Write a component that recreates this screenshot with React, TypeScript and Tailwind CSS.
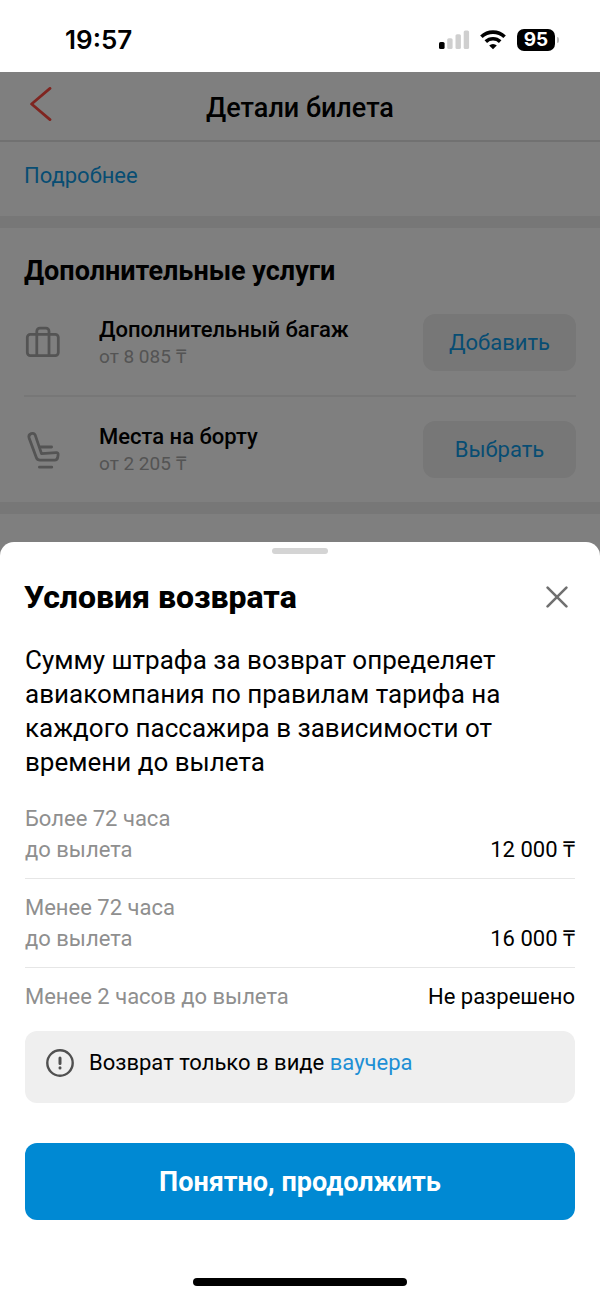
const services = [
    { title: 'Дополнительный багаж', price: 'от 8 085 ₸', action: 'Добавить', icon: <SuitcaseIcon /> },
    { title: 'Места на борту', price: 'от 2 205 ₸', action: 'Выбрать', icon: <SeatIcon /> },
]

const penalties = [
    { lines: ['Более 72 часа', 'до вылета'], value: '12 000 ₸' },
    { lines: ['Менее 72 часа', 'до вылета'], value: '16 000 ₸' },
    { lines: ['Менее 2 часов до вылета'], value: 'Не разрешено' },
]

function SuitcaseIcon() {
    return (
        <svg viewBox="0 0 36 36" className="w-9 h-9" fill="none" stroke="#a8a8a8" strokeWidth="2.8" strokeLinejoin="round">
            <rect x="3.3" y="9.3" width="31" height="21.3" rx="3" />
            <path d="M12.8 30.5V6.2a3 3 0 0 1 3-3h6.2a3 3 0 0 1 3 3v24.3" />
        </svg>
    )
}

function SeatIcon() {
    return (
        <svg viewBox="0 0 36 40" className="w-9 h-10" fill="none" stroke="#a8a8a8" strokeWidth="2.8" strokeLinecap="round" strokeLinejoin="round">
            <path d="M5.1 8C3.8 3.6 9.9 1.7 11.4 5.6L17.5 23.6L32.2 22.6C33.7 22.5 34.3 23.4 34.1 24.8L33.7 27.6C33.4 29.3 32.4 30.2 30.8 30.2H16C14.2 30.2 13 29.4 12.4 27.8Z" />
            <path d="M16.8 17h10.8M15.4 37.2h12.4" />
        </svg>
    )
}

function StatusBar() {
    return (
        <div className="h-[72px] pl-[65px] pr-[41px] bg-white flex items-center justify-between shrink-0">
            <span className="font-['Inter'] text-[26px] leading-8 font-semibold pt-2">19:57</span>
            <div className="flex items-center pt-2">
                <svg viewBox="0 0 31 20" className="w-[31px] h-5" fill="#cfcfcf">
                    <rect x="0" y="12" width="5.6" height="7" rx="1.6" fill="#000" />
                    <rect x="8.2" y="8.2" width="5.4" height="10.8" rx="1.6" />
                    <rect x="16.5" y="4.2" width="5.4" height="14.8" rx="1.6" />
                    <rect x="24.7" y="0.4" width="5.4" height="18.6" rx="1.6" />
                </svg>
                <svg viewBox="0 0 26 20" className="w-[26px] h-5 ml-[10px]" fill="none" stroke="#000" strokeWidth="3.6">
                    <path d="M1.4 6.8a16.8 16.8 0 0 1 23.2 0" />
                    <path d="M5.8 11.6a10.4 10.4 0 0 1 14.4 0" />
                    <path d="M13 19.2l-3.8-3.7a5.4 5.4 0 0 1 7.6 0z" fill="#000" stroke="none" />
                </svg>
                <div className="w-[38px] h-[22px] ml-[11px] bg-black rounded-[7px] flex items-center justify-center">
                    <span className="font-['Inter'] text-[19px] leading-[22px] font-bold text-white">95</span>
                </div>
                <div className="w-[2px] h-[6px] ml-[2px] bg-[#bdbdbd] rounded-r-full"></div>
            </div>
        </div>
    )
}

function TicketPage() {
    return (
        <div className="relative bg-white pb-7 shrink-0">
            <header className="h-[70px] border-b-2 border-[#e2e2e2] grid grid-cols-[60px_1fr_60px] items-center">
                <button aria-label="Назад" className="pl-[30px] pb-1">
                    <svg viewBox="0 0 22 34" className="w-[22px] h-[34px]" fill="none" stroke="#ff4a40" strokeWidth="2.8" strokeLinecap="round" strokeLinejoin="round">
                        <path d="M20 1.4L1.6 17L20 32.6" />
                    </svg>
                </button>
                <h1 className="pt-1 text-[27px] leading-8 font-medium text-center">Детали билета</h1>
            </header>
            <div className="px-6 pt-5 pb-[26px]">
                <a href="#details" className="block text-[22px] leading-7 text-[#0f9be6]">Подробнее</a>
            </div>
            <div className="h-3 bg-[#eeeeee]"></div>
            <section className="px-6 pt-6">
                <h2 className="text-[27px] leading-[38px] font-bold">Дополнительные услуги</h2>
                <ul className="divide-y-2 divide-[#eeeeee]">
                    {services.map((item) => (
                        <li key={item.title} className="py-6 flex items-center">
                            <div className="w-[75px] shrink-0">{item.icon}</div>
                            <div className="flex-1">
                                <h3 className="text-[22px] leading-7 font-medium">{item.title}</h3>
                                <p className="text-[19px] leading-[26px] text-[#a8a8a8]">{item.price}</p>
                            </div>
                            <button className="w-[153px] h-[57px] rounded-xl bg-[#eeeeee] text-[22px] leading-7 text-[#0f9be6]">{item.action}</button>
                        </li>
                    ))}
                </ul>
            </section>
            <div className="h-3 bg-[#eeeeee]"></div>
            {/* dims the page while the sheet is open */}
            <div className="absolute inset-0 bg-black/50"></div>
        </div>
    )
}

function RefundSheet() {
    return (
        <div role="dialog" aria-labelledby="refund-title" className="flex-1 bg-white rounded-t-[14px] flex flex-col">
            <div className="w-14 h-[6px] mt-[6px] rounded-full bg-[#d4d4d4] self-center"></div>
            <div className="px-6 mt-[23px] flex items-center justify-between">
                <h2 id="refund-title" className="text-[32px] leading-10 font-extrabold">Условия возврата</h2>
                <button aria-label="Закрыть" className="px-2">
                    <svg viewBox="0 0 22 22" className="w-[22px] h-[22px]" fill="none" stroke="#707070" strokeWidth="2.6" strokeLinecap="round">
                        <path d="M1.6 1.6l18.8 18.8M20.4 1.6L1.6 20.4" />
                    </svg>
                </button>
            </div>
            <div className="px-[25px] pt-[26px]">
                <p className="text-[26px] leading-[34px]">
                    Сумму штрафа за возврат определяет авиакомпания по правилам тарифа на каждого пассажира в зависимости от времени до вылета
                </p>
                <table className="w-full mt-[11px] text-[22px] leading-[31px]">
                    <tbody className="divide-y divide-[#e6e6e6]">
                        {penalties.map((row) => (
                            <tr key={row.lines[0]}>
                                <th scope="row" className="py-[13px] text-left font-normal text-[#8f8f8f]">
                                    {row.lines.map((line) => (
                                        <span key={line} className="block">{line}</span>
                                    ))}
                                </th>
                                <td className="py-[13px] text-right align-bottom whitespace-nowrap">{row.value}</td>
                            </tr>
                        ))}
                    </tbody>
                </table>
                <div className="mt-[6px] px-[21px] pt-4 pb-[25px] rounded-xl bg-[#efefef] flex items-center">
                    <svg viewBox="0 0 28 28" className="w-7 h-7 mr-[15px]" fill="none" stroke="#505050" strokeLinecap="round">
                        <circle cx="14" cy="14" r="12.7" strokeWidth="2.4" />
                        <path d="M14 9v5.4M14 18.8v.1" strokeWidth="3" />
                    </svg>
                    <p className="text-[22px] leading-[31px]">
                        Возврат только в виде <a href="#voucher" className="text-[#1e8fd5]">ваучера</a>
                    </p>
                </div>
                <button className="w-full h-[77px] mt-10 rounded-xl bg-[#0089d3] text-[27px] leading-8 font-bold text-white">
                    Понятно, продолжить
                </button>
            </div>
            <div className="w-[214px] h-2 mt-auto mb-[11px] rounded-full bg-black self-center"></div>
        </div>
    )
}

function App() {
    return (
        <div className="min-h-screen flex flex-col bg-[#808080] text-black font-['Roboto',sans-serif]">
            <StatusBar />
            <TicketPage />
            <RefundSheet />
        </div>
    )
}

export default App
